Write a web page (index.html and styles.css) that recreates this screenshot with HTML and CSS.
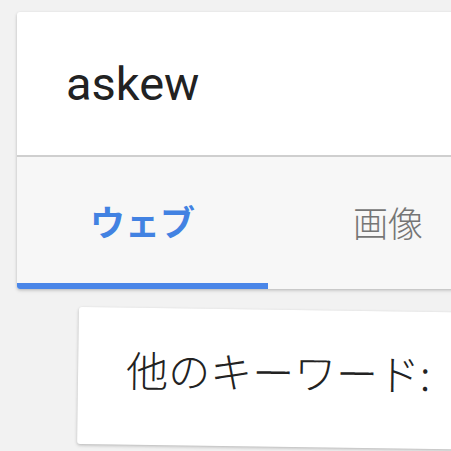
FILE: index.html
```html
<!DOCTYPE html>
<html lang="ja">
<head>
<meta charset="utf-8">
<link rel="stylesheet" href="styles.css">
</head>
<body>
<div class="page">
  <div class="card search-card">
    <div class="query">askew</div>
    <div class="tabs">
      <div class="tab active">ウェブ</div>
      <div class="tab">画像</div>
    </div>
  </div>
  <div class="card related-card">
    <div class="related">他のキーワード:</div>
  </div>
</div>
</body>
</html>
```
FILE: styles.css
```css
html, body {
  margin: 0;
  padding: 0;
  background: #f2f2f2;
  overflow: hidden;
  width: 451px;
  height: 451px;
}
.page {
  display: flex;
  flex-direction: column;
  padding: 12px 0 0 17px;
  gap: 18px;
  font-family: "Roboto", "Noto Sans CJK JP", sans-serif;
}
.card {
  background: #fff;
  border-radius: 3px;
  box-shadow: 0 1px 3px rgba(0,0,0,0.18), 0 2px 4px rgba(0,0,0,0.08);
  overflow: hidden;
}
.search-card {
  width: 500px;
}
.query {
  height: 145px;
  box-sizing: border-box;
  padding: 46px 0 0 49px;
  font-size: 47px;
  line-height: 52px;
  color: #222;
  border-bottom: 2px solid #cfcfcf;
}
.tabs {
  display: flex;
  height: 132px;
  background: #f7f7f7;
}
.tab {
  flex-shrink: 0;
  display: flex;
  align-items: center;
  justify-content: center;
  font-size: 35px;
  color: #757575;
  width: 240px;
  box-sizing: border-box;
  padding-bottom: 4px;
  font-family: "Noto Sans CJK JP", sans-serif;
  font-weight: 300;
}
.tab.active {
  width: 251px;
  color: #4282e2;
  font-weight: 700;
  border-bottom: 6px solid #4a86e8;
  padding-bottom: 0;
}
.related-card {
  margin-left: 62px;
  width: 420px;
  height: 137px;
  transform: rotate(0.8deg);
  transform-origin: 0 0;
  display: flex;
  align-items: center;
}
.related {
  padding-left: 48px;
  padding-bottom: 16px;
  font-size: 42px;
  color: #222;
  font-family: "Noto Sans CJK JP", sans-serif;
  font-weight: 300;
}
```
